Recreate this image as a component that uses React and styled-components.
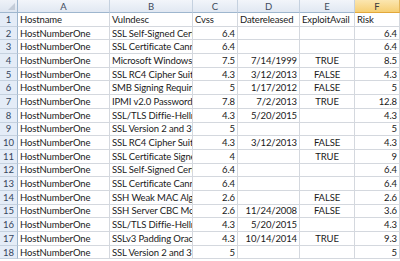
import React from "react";
import styled, { createGlobalStyle } from "styled-components";

const GlobalStyle = createGlobalStyle`
  html, body {
    margin: 0;
    padding: 0;
    background: #ffffff;
  }
  body {
    font-family: Lato, "Open Sans", "Liberation Sans", sans-serif;
  }
`;

const columns = ["A", "B", "C", "D", "E", "F"];

const rows = [
  ["Hostname", "Vulndesc", "Cvss", "Datereleased", "ExploitAvail", "Risk"],
  ["HostNumberOne", "SSL Self-Signed Certificate", "6.4", "", "", "6.4"],
  ["HostNumberOne", "SSL Certificate Cannot Be Trusted", "6.4", "", "", "6.4"],
  ["HostNumberOne", "Microsoft Windows", "7.5", "7/14/1999", "TRUE", "8.5"],
  ["HostNumberOne", "SSL RC4 Cipher Suites", "4.3", "3/12/2013", "FALSE", "4.3"],
  ["HostNumberOne", "SMB Signing Required", "5", "1/17/2012", "FALSE", "5"],
  ["HostNumberOne", "IPMI v2.0 Password Hash", "7.8", "7/2/2013", "TRUE", "12.8"],
  ["HostNumberOne", "SSL/TLS Diffie-Hellman", "4.3", "5/20/2015", "", "4.3"],
  ["HostNumberOne", "SSL Version 2 and 3", "5", "", "", "5"],
  ["HostNumberOne", "SSL RC4 Cipher Suites", "4.3", "3/12/2013", "FALSE", "4.3"],
  ["HostNumberOne", "SSL Certificate Signed", "4", "", "TRUE", "9"],
  ["HostNumberOne", "SSL Self-Signed Certificate", "6.4", "", "", "6.4"],
  ["HostNumberOne", "SSL Certificate Cannot Be Trusted", "6.4", "", "", "6.4"],
  ["HostNumberOne", "SSH Weak MAC Algorithms", "2.6", "", "FALSE", "2.6"],
  ["HostNumberOne", "SSH Server CBC Mode", "2.6", "11/24/2008", "FALSE", "3.6"],
  ["HostNumberOne", "SSL/TLS Diffie-Hellman", "4.3", "5/20/2015", "", "4.3"],
  ["HostNumberOne", "SSLv3 Padding Oracle", "4.3", "10/14/2014", "TRUE", "9.3"],
  ["HostNumberOne", "SSL Version 2 and 3", "5", "", "", "5"],
];

// alignment per column for data rows (row 1 is text, so left)
const align = ["left", "left", "right", "right", "center", "right"];

const Sheet = styled.div`
  width: 400px;
  height: 261px;
  overflow: hidden;
  display: grid;
  grid-template-columns: 18px 92px 83px 45px 62px 55px 45px;
  grid-template-rows: 13px repeat(18, 13.7px);
  background: #ffffff;
`;

const Corner = styled.div`
  background: linear-gradient(#eef2f8, #dde5f0);
  border-right: 1px solid #9eb6ce;
  border-bottom: 1px solid #9eb6ce;
  position: relative;
  &::after {
    content: "";
    position: absolute;
    right: 2px;
    bottom: 2px;
    width: 0;
    height: 0;
    border-left: 7px solid transparent;
    border-bottom: 7px solid #c3ccd8;
  }
`;

const ColHead = styled.div`
  display: flex;
  align-items: center;
  justify-content: center;
  font-size: 9.5px;
  color: ${(p) => (p.$active ? "#3b3b3b" : "#3e4a5c")};
  background: ${(p) =>
    p.$active
      ? "linear-gradient(#fbe6b0, #f6cf74)"
      : "linear-gradient(#f2f5fa, #e1e8f2)"};
  border-right: 1px solid ${(p) => (p.$active ? "#e2b55a" : "#c5d1df")};
  border-bottom: 1px solid ${(p) => (p.$active ? "#e2a83a" : "#9eb6ce")};
  box-sizing: border-box;
`;

const RowHead = styled.div`
  display: flex;
  align-items: center;
  justify-content: center;
  font-size: 9.5px;
  color: #35455c;
  background: #e4ecf7;
  border-right: 1px solid #9eb6ce;
  border-bottom: 1px solid #c5d1df;
  box-sizing: border-box;
`;

const Cell = styled.div`
  display: flex;
  align-items: center;
  justify-content: ${(p) =>
    p.$align === "right" ? "flex-end" : p.$align === "center" ? "center" : "flex-start"};
  padding: 0 2px;
  font-size: 9.5px;
  letter-spacing: -0.12px;
  color: #1a1a1a;
  white-space: nowrap;
  overflow: hidden;
  border-right: 1px solid #d4d8de;
  border-bottom: 1px solid #d4d8de;
  box-sizing: border-box;
`;

export default function App() {
  return (
    <>
      <GlobalStyle />
      <Sheet>
        <Corner />
        {columns.map((c) => (
          <ColHead key={c} $active={c === "F"}>
            {c}
          </ColHead>
        ))}
        {rows.map((row, i) => (
          <React.Fragment key={i}>
            <RowHead>{i + 1}</RowHead>
            {row.map((val, j) => (
              <Cell key={j} $align={i === 0 ? "left" : align[j]}>
                {val}
              </Cell>
            ))}
          </React.Fragment>
        ))}
      </Sheet>
    </>
  );
}
